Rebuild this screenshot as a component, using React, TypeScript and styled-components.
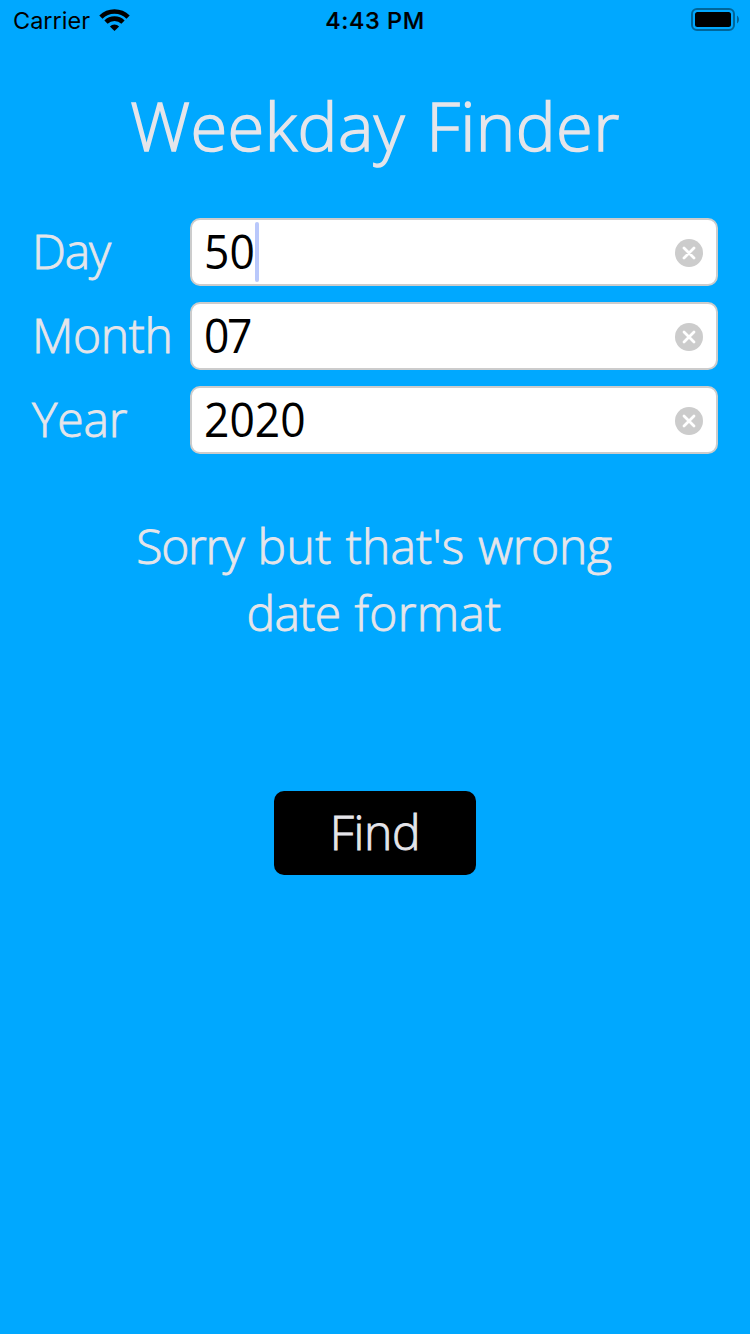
import React from "react";
import styled, { createGlobalStyle } from "styled-components";

const GlobalStyle = createGlobalStyle`
  * { box-sizing: border-box; }
  body { margin: 0; background: #00a8ff; }
`;

const Screen = styled.main`
  width: 750px;
  height: 1334px;
  background: #00a8ff;
  color: #e5e5ea;
  font-family: "Open Sans", "Noto Sans", sans-serif;
  font-weight: 300;
  -webkit-text-stroke: 0.9px #e5e5ea;
  overflow: hidden;
  display: flex;
  flex-direction: column;
`;

const StatusBar = styled.header`
  height: 40px;
  padding: 0 11px 0 13px;
  display: grid;
  grid-template-columns: 1fr auto 1fr;
  align-items: center;
  color: #000;
  font-family: Inter, "Liberation Sans", sans-serif;
  font-size: 23.5px;
  font-weight: 400;
  -webkit-text-stroke: 0;
`;

const Carrier = styled.div`
  display: flex;
  align-items: center;
  gap: 9px;
`;

const Clock = styled.div`
  margin-right: 2px;
  font-weight: 500;
  letter-spacing: 0.6px;
  -webkit-text-stroke: 0.2px #000;
`;

const BatteryIcon = styled.svg`
  justify-self: end;
  margin-top: -2px;
`;

const Title = styled.h1`
  margin: 37px 0 0;
  height: 96px;
  line-height: 96px;
  text-align: center;
  font-size: 67px;
  font-weight: 300;
  letter-spacing: 0.4px;
  word-spacing: 3.5px;
  white-space: nowrap;
  -webkit-text-stroke-width: 1.4px;
`;

const Form = styled.form`
  margin: 45px 32px 0;
  display: flex;
  flex-direction: column;
  gap: 16px;
`;

const Row = styled.label`
  display: flex;
  height: 68px;
`;

const Caption = styled.span<{ $tracking: number }>`
  width: 158px;
  flex: none;
  font-size: 48px;
  line-height: 65px;
  letter-spacing: ${(p) => p.$tracking}px;
  white-space: nowrap;
`;

const Field = styled.span`
  flex: 1;
  display: flex;
  align-items: center;
  padding: 0 13px;
  background: #fff;
  border: 2px solid #ccc;
  border-radius: 10px;
  color: #000;
`;

const Value = styled.span<{ $tracking: number }>`
  margin: -2px -4px 0 -1px;
  font-size: 48px;
  line-height: 60px;
  font-weight: 400;
  letter-spacing: ${(p) => p.$tracking}px;
  transform: scaleX(0.925);
  transform-origin: left center;
  -webkit-text-stroke: 0;
`;

const Caret = styled.span`
  width: 4px;
  height: 60px;
  border-radius: 2px;
  background: #b9c8fb;
`;

const ClearIcon = styled.svg`
  margin-left: auto;
  margin-top: 2px;
`;

const Message = styled.p`
  margin: 58px 2px 0 0;
  text-align: center;
  font-size: 48px;
  line-height: 67px;
`;

const Line = styled.span`
  display: block;
  word-spacing: 1.5px;
`;

const Word = styled.span<{ $tracking: number }>`
  letter-spacing: ${(p) => p.$tracking}px;
`;

const FindButton = styled.button`
  margin: 145px auto 0;
  width: 202px;
  height: 84px;
  padding: 0 0 3px;
  border: 0;
  border-radius: 10px;
  background: #000;
  color: #e5e5ea;
  font: inherit;
  font-size: 48px;
  line-height: 81px;
  letter-spacing: -0.3px;
`;

const fields = [
  { label: "Day", value: "50", focused: true, tracking: -1.2, valueTracking: 0 },
  { label: "Month", value: "07", focused: false, tracking: -0.4, valueTracking: -2.5 },
  { label: "Year", value: "2020", focused: false, tracking: -0.1, valueTracking: 0 },
];

const message = [
  [
    { text: "Sorry", tracking: -1.3 },
    { text: "but", tracking: 0.4 },
    { text: "that's", tracking: 0.2 },
    { text: "wrong", tracking: -0.3 },
  ],
  [
    { text: "date", tracking: -0.6 },
    { text: "format", tracking: 0.3 },
  ],
];

export default function App() {
  return (
    <Screen>
      <GlobalStyle />
      <StatusBar>
        <Carrier>
          <span>Carrier</span>
          <svg width="31" height="22" viewBox="0 0 31 22" fill="none" stroke="#000">
            <path d="M1.9 8.1a19.4 19.4 0 0 1 27.2 0" strokeWidth="4.6" />
            <path d="M7 13.2a12 12 0 0 1 17 0" strokeWidth="4.6" />
            <path d="M15.5 22l-4.6-4.6a6.5 6.5 0 0 1 9.2 0z" fill="#000" stroke="none" />
          </svg>
        </Carrier>
        <Clock>4:43 PM</Clock>
        <BatteryIcon width="48" height="24" viewBox="0 0 48 24">
          <rect x="1" y="2" width="42" height="21" rx="5" fill="none" stroke="#006599" strokeWidth="2" />
          <rect x="4" y="5" width="36" height="15" rx="2.5" fill="#000" />
          <path d="M46 8.500c2.600 1.600 2.600 6.400 0 8z" fill="#006599" />
        </BatteryIcon>
      </StatusBar>
      <Title>Weekday Finder</Title>
      <Form>
        {fields.map((f) => (
          <Row key={f.label}>
            <Caption $tracking={f.tracking}>{f.label}</Caption>
            <Field>
              <Value $tracking={f.valueTracking}>{f.value}</Value>
              {f.focused && <Caret />}
              <ClearIcon width="28" height="28" viewBox="0 0 28 28">
                <circle cx="14" cy="14" r="14" fill="#ccc" />
                <path d="M9 9l10 10M19 9L9 19" stroke="#fff" strokeWidth="2.8" strokeLinecap="round" />
              </ClearIcon>
            </Field>
          </Row>
        ))}
      </Form>
      <Message>
        {message.map((line, i) => (
          <Line key={i}>
            {line.map((w, j) => (
              <React.Fragment key={w.text}>
                {j > 0 && " "}
                <Word $tracking={w.tracking}>{w.text}</Word>
              </React.Fragment>
            ))}
          </Line>
        ))}
      </Message>
      <FindButton>Find</FindButton>
    </Screen>
  );
}
